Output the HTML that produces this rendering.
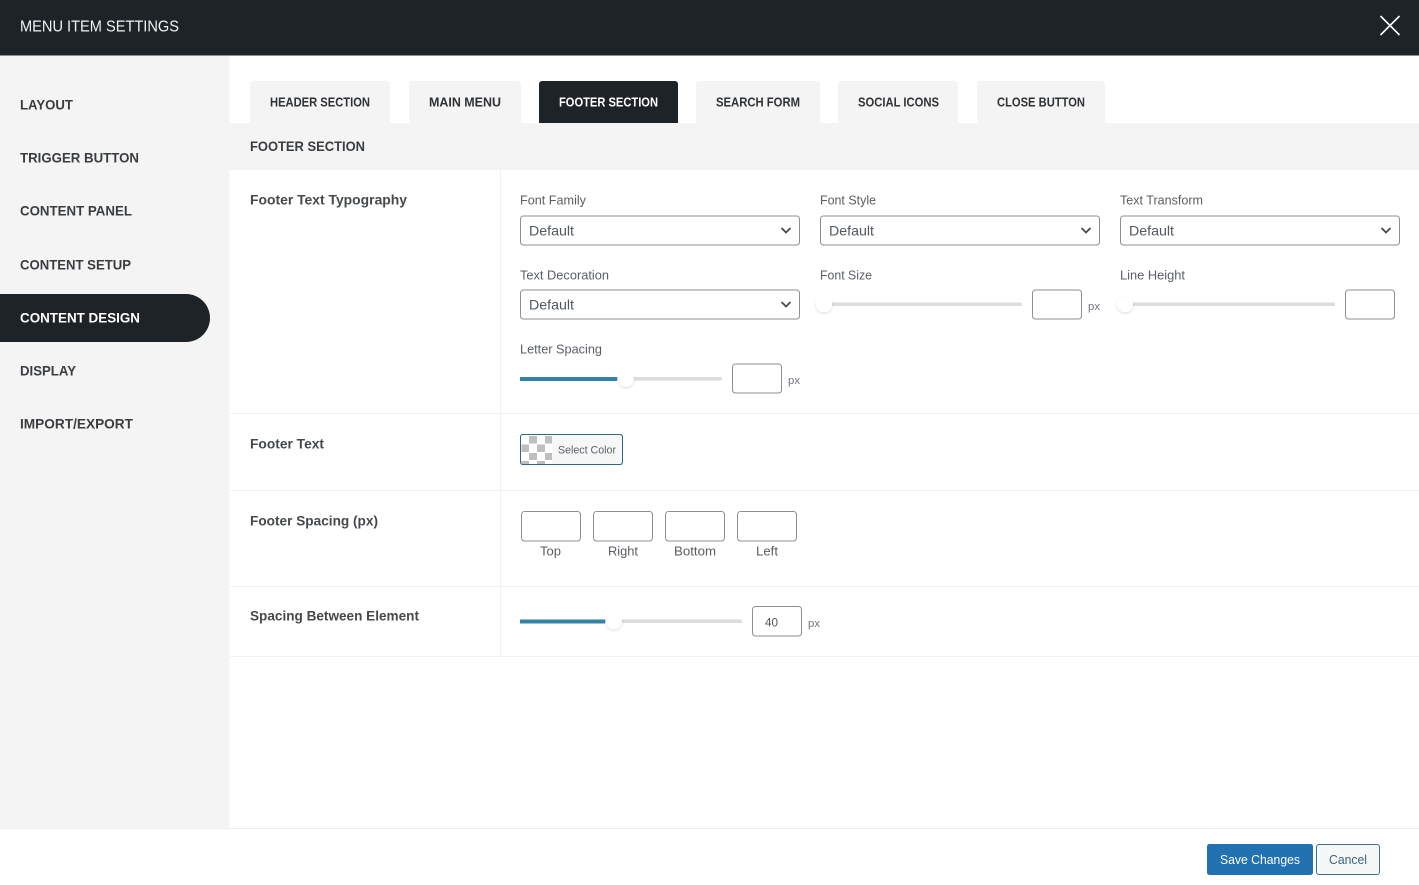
<!DOCTYPE html>
<html lang="en">
<head>
<meta charset="utf-8">
<title>Menu Item Settings</title>
<style>
html,body{margin:0;padding:0;background:#fff;width:1419px;height:885px;overflow:hidden}
svg{display:block;font-family:"Liberation Sans",sans-serif}
.nav{font-size:14px;font-weight:700;fill:#3a3d40}
.tab{font-size:12.5px;font-weight:700;fill:#2f3235}
.lb{font-size:14px;font-weight:700;fill:#46494c}
.fl{font-size:13px;fill:#5a5e63}
.def{font-size:14px;fill:#50575e}
.px{font-size:11px;fill:#70757a}
.box{fill:#fff;stroke:#8c8f94;stroke-width:1}
.chev{fill:none;stroke:#43484d;stroke-width:1.7}
.track{fill:#dcdcdc}
.fill{fill:#3582a8}
.knob{fill:#fff;filter:url(#s)}
.sep{fill:#f1f1f2}
</style>
</head>
<body>
<svg width="1419" height="885" viewBox="0 0 1419 885" xmlns="http://www.w3.org/2000/svg">
<defs><filter id="s" x="-50%" y="-50%" width="200%" height="200%"><feDropShadow dx="0" dy="1" stdDeviation="1" flood-color="#000" flood-opacity=".16"/></filter></defs>

<!-- header -->
<rect width="1419" height="55.5" fill="#1d2327"/>
<text x="20" y="31.5" font-size="16" fill="#f2f3f3" textLength="159" lengthAdjust="spacingAndGlyphs">MENU ITEM SETTINGS</text>
<path d="M1380.5 16L1399.5 35M1399.5 16L1380.5 35" stroke="#fff" stroke-width="1.6" fill="none"/>

<!-- sidebar -->
<rect x="0" y="56" width="229.5" height="772" fill="#f4f4f5"/>
<text class="nav" x="20" y="109.5" textLength="53" lengthAdjust="spacingAndGlyphs">LAYOUT</text>
<text class="nav" x="20" y="162.5" textLength="119" lengthAdjust="spacingAndGlyphs">TRIGGER BUTTON</text>
<text class="nav" x="20" y="215.5" textLength="112" lengthAdjust="spacingAndGlyphs">CONTENT PANEL</text>
<text class="nav" x="20" y="269.5" textLength="111" lengthAdjust="spacingAndGlyphs">CONTENT SETUP</text>
<path d="M0 294H186a24 24 0 0 1 0 48H0Z" fill="#1d2327"/>
<text class="nav" style="fill:#fff" x="20" y="322.5" textLength="120" lengthAdjust="spacingAndGlyphs">CONTENT DESIGN</text>
<text class="nav" x="20" y="375.5" textLength="56" lengthAdjust="spacingAndGlyphs">DISPLAY</text>
<text class="nav" x="20" y="428.5" textLength="113" lengthAdjust="spacingAndGlyphs">IMPORT/EXPORT</text>

<!-- tabs -->
<path d="M250 123V84a3 3 0 0 1 3-3H387a3 3 0 0 1 3 3V123Z" fill="#f4f4f5"/>
<path d="M409 123V84a3 3 0 0 1 3-3H518a3 3 0 0 1 3 3V123Z" fill="#f4f4f5"/>
<path d="M539 123V84a3 3 0 0 1 3-3H675a3 3 0 0 1 3 3V123Z" fill="#1d2327"/>
<path d="M696 123V84a3 3 0 0 1 3-3H817a3 3 0 0 1 3 3V123Z" fill="#f4f4f5"/>
<path d="M838 123V84a3 3 0 0 1 3-3H955a3 3 0 0 1 3 3V123Z" fill="#f4f4f5"/>
<path d="M977 123V84a3 3 0 0 1 3-3H1102a3 3 0 0 1 3 3V123Z" fill="#f4f4f5"/>
<text class="tab" x="270" y="106.5" textLength="100" lengthAdjust="spacingAndGlyphs">HEADER SECTION</text>
<text class="tab" x="429" y="106.5" textLength="72" lengthAdjust="spacingAndGlyphs">MAIN MENU</text>
<text class="tab" style="fill:#fff" x="559" y="106.5" textLength="99" lengthAdjust="spacingAndGlyphs">FOOTER SECTION</text>
<text class="tab" x="716" y="106.5" textLength="84" lengthAdjust="spacingAndGlyphs">SEARCH FORM</text>
<text class="tab" x="858" y="106.5" textLength="81" lengthAdjust="spacingAndGlyphs">SOCIAL ICONS</text>
<text class="tab" x="997" y="106.5" textLength="88" lengthAdjust="spacingAndGlyphs">CLOSE BUTTON</text>

<!-- section title -->
<rect x="229" y="123" width="1190" height="47" fill="#f4f4f5"/>
<text class="nav" x="250" y="151" textLength="115" lengthAdjust="spacingAndGlyphs">FOOTER SECTION</text>

<!-- row separators -->
<rect class="sep" x="500" y="170" width="1" height="487"/>
<rect class="sep" x="230" y="413" width="1189" height="1"/>
<rect class="sep" x="230" y="490" width="1189" height="1"/>
<rect class="sep" x="230" y="586" width="1189" height="1"/>
<rect class="sep" x="230" y="656" width="1189" height="1"/>

<!-- row labels -->
<text class="lb" x="250" y="204.5" textLength="157" lengthAdjust="spacingAndGlyphs">Footer Text Typography</text>
<text class="lb" x="250" y="448.5" textLength="74" lengthAdjust="spacingAndGlyphs">Footer Text</text>
<text class="lb" x="250" y="525.5" textLength="128" lengthAdjust="spacingAndGlyphs">Footer Spacing (px)</text>
<text class="lb" x="250" y="620.5" textLength="169" lengthAdjust="spacingAndGlyphs">Spacing Between Element</text>

<!-- field labels -->
<text class="fl" x="520" y="204.5" textLength="66" lengthAdjust="spacingAndGlyphs">Font Family</text>
<text class="fl" x="820" y="204.5" textLength="56" lengthAdjust="spacingAndGlyphs">Font Style</text>
<text class="fl" x="1120" y="204.5" textLength="83" lengthAdjust="spacingAndGlyphs">Text Transform</text>
<text class="fl" x="520" y="279.5" textLength="89" lengthAdjust="spacingAndGlyphs">Text Decoration</text>
<text class="fl" x="820" y="279.5" textLength="52" lengthAdjust="spacingAndGlyphs">Font Size</text>
<text class="fl" x="1120" y="279.5" textLength="65" lengthAdjust="spacingAndGlyphs">Line Height</text>
<text class="fl" x="520" y="353.5" textLength="82" lengthAdjust="spacingAndGlyphs">Letter Spacing</text>

<!-- selects -->
<rect class="box" x="520.5" y="216" width="279" height="29" rx="3"/>
<rect class="box" x="820.5" y="216" width="279" height="29" rx="3"/>
<rect class="box" x="1120.5" y="216" width="279" height="29" rx="3"/>
<rect class="box" x="520.5" y="290" width="279" height="29" rx="3"/>
<text class="def" x="529" y="235.5" textLength="45" lengthAdjust="spacingAndGlyphs">Default</text>
<text class="def" x="829" y="235.5" textLength="45" lengthAdjust="spacingAndGlyphs">Default</text>
<text class="def" x="1129" y="235.5" textLength="45" lengthAdjust="spacingAndGlyphs">Default</text>
<text class="def" x="529" y="309.5" textLength="45" lengthAdjust="spacingAndGlyphs">Default</text>
<path class="chev" d="M781.5 228L786 232.5L790.5 228"/>
<path class="chev" d="M1081.5 228L1086 232.5L1090.5 228"/>
<path class="chev" d="M1381.5 228L1386 232.5L1390.5 228"/>
<path class="chev" d="M781.5 302L786 306.5L790.5 302"/>

<!-- font size slider -->
<rect class="track" x="820" y="302.5" width="202" height="3.5" rx="1.5"/>
<circle class="knob" cx="824" cy="304.5" r="8"/>
<rect class="box" x="1032.5" y="290" width="49" height="29" rx="3"/>
<text class="px" x="1088" y="310" textLength="12" lengthAdjust="spacingAndGlyphs">px</text>

<!-- line height slider -->
<rect class="track" x="1120" y="302.5" width="215" height="3.5" rx="1.5"/>
<circle class="knob" cx="1125" cy="304.5" r="8"/>
<rect class="box" x="1345.5" y="290" width="49" height="29" rx="3"/>

<!-- letter spacing slider -->
<rect class="track" x="520" y="377" width="202" height="3.5" rx="1.5"/>
<rect class="fill" x="520" y="377" width="97" height="4"/>
<circle class="knob" cx="626" cy="379" r="8"/>
<rect class="box" x="732.5" y="364" width="49" height="29" rx="3"/>
<text class="px" x="788" y="384" textLength="12" lengthAdjust="spacingAndGlyphs">px</text>

<!-- colour picker -->
<rect x="520.5" y="434.5" width="102" height="30" rx="2.5" fill="#f6f7f7" stroke="#2f6a82"/>
<rect x="521" y="435" width="31" height="29" fill="#fff"/>
<g fill="#bfbfbf">
<rect x="529" y="436" width="8" height="7.5"/><rect x="545" y="436" width="7" height="7.5"/>
<rect x="521.5" y="444.5" width="7.5" height="7.5"/><rect x="537" y="444.5" width="8" height="7.5"/>
<rect x="529" y="453" width="8" height="7"/><rect x="545" y="453" width="7" height="7"/>
<rect x="521.5" y="461" width="7.5" height="3"/><rect x="537" y="461" width="8" height="3"/>
</g>
<rect x="520.5" y="434.5" width="102" height="30" rx="2.5" fill="none" stroke="#2f6a82"/>
<text x="558" y="453.5" font-size="11" fill="#5a6268" textLength="58" lengthAdjust="spacingAndGlyphs">Select Color</text>

<!-- spacing inputs -->
<rect class="box" x="521.5" y="511.5" width="59" height="29.5" rx="3"/>
<rect class="box" x="593.5" y="511.5" width="59" height="29.5" rx="3"/>
<rect class="box" x="665.5" y="511.5" width="59" height="29.5" rx="3"/>
<rect class="box" x="737.5" y="511.5" width="59" height="29.5" rx="3"/>
<text class="fl" x="540" y="555.5" textLength="21" lengthAdjust="spacingAndGlyphs">Top</text>
<text class="fl" x="608" y="555.5" textLength="30" lengthAdjust="spacingAndGlyphs">Right</text>
<text class="fl" x="674" y="555.5" textLength="42" lengthAdjust="spacingAndGlyphs">Bottom</text>
<text class="fl" x="756" y="555.5" textLength="22" lengthAdjust="spacingAndGlyphs">Left</text>

<!-- spacing between slider -->
<rect class="track" x="520" y="619.5" width="222" height="3.5" rx="1.5"/>
<rect class="fill" x="520" y="619.5" width="85" height="4"/>
<circle class="knob" cx="614" cy="621.5" r="8"/>
<rect class="box" x="752.5" y="606.5" width="49" height="29.5" rx="3"/>
<text x="765" y="626.5" font-size="12" fill="#50575e" textLength="13" lengthAdjust="spacingAndGlyphs">40</text>
<text class="px" x="808" y="627" textLength="12" lengthAdjust="spacingAndGlyphs">px</text>

<!-- footer -->
<rect x="0" y="828" width="1419" height="1" fill="#ececed"/>
<rect x="1207" y="844" width="106" height="31" rx="2.5" fill="#2271b1"/>
<text x="1220" y="864" font-size="13" fill="#fff" textLength="80" lengthAdjust="spacingAndGlyphs">Save Changes</text>
<rect x="1316.5" y="844.5" width="63" height="30" rx="2.5" fill="#f6f7f7" stroke="#3f6f8c"/>
<text x="1329" y="864" font-size="13" fill="#39657f" textLength="38" lengthAdjust="spacingAndGlyphs">Cancel</text>
</svg>
</body>
</html>
